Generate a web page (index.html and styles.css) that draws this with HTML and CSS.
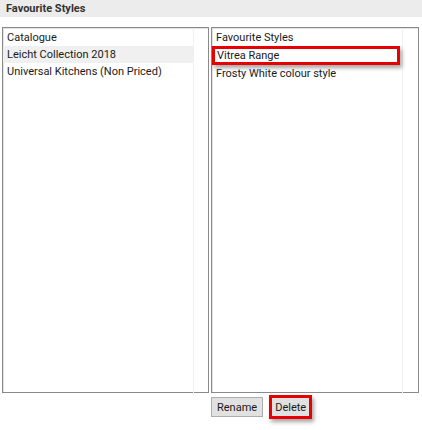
FILE: index.html
```html
<!DOCTYPE html>
<html lang="en">
<head>
  <meta charset="UTF-8">
  <meta name="viewport" content="width=device-width, initial-scale=1.0">
  <title>Favourite Styles</title>
  <link rel="stylesheet" href="styles.css">
</head>
<body>

  <h1 class="title-bar">Favourite Styles</h1>

  <div class="panels">
    <div class="list-box">
      <ul class="list">
        <li class="list-head">Catalogue</li>
        <li class="selected">Leicht Collection 2018</li>
        <li>Universal Kitchens (Non Priced)</li>
      </ul>
    </div>

    <div class="right-col">
      <div class="list-box">
        <ul class="list">
          <li class="list-head">Favourite Styles</li>
          <li class="marked">Vitrea Range</li>
          <li>Frosty White colour style</li>
        </ul>
      </div>

      <div class="buttons">
        <button class="btn">Rename</button>
        <button class="btn marked-btn">Delete</button>
      </div>
    </div>
  </div>

</body>
</html>
```

FILE: styles.css
```css
body {
  margin: 0;
  width: 422px;
  height: 430px;
  background-color: #ffffff;
  font-family: Roboto, "Liberation Sans", Arial, sans-serif;
  font-size: 11px;
  color: #1a1a1a;
}

.title-bar {
  margin: 0;
  height: 17px;
  line-height: 17px;
  padding-left: 6px;
  background-color: #ececec;
  font-size: 11px;
  font-weight: bold;
  color: #333;
}

.panels {
  display: flex;
  gap: 2px;
  padding: 10px 3px 0 2px;
}

.list-box {
  width: 206px;
  height: 364px;
  border: 1px solid #8a8a8a;
  box-shadow: inset 1px 1px 0 #e2e2e2;
  background-color: #fff;
}

.right-col {
  display: flex;
  flex-direction: column;
}

.list {
  list-style: none;
  margin: 0;
  padding: 1px 0 0 0;
  width: 190px;
  height: 100%;
  border-right: 1px solid #f0f0f0;
}

.list li {
  height: 17px;
  line-height: 17px;
  padding-left: 4px;
  white-space: nowrap;
}

.list .selected {
  background-color: #f0f0f0;
}

.list .marked {
  margin: 0 -1px 0 0;
  width: 180px;
  height: 13px;
  line-height: 13px;
  border: 3px solid #e60000;
  padding-left: 2px;
  box-shadow: 2px 3px 4px rgba(0, 0, 0, 0.35);
}

.buttons {
  display: flex;
  gap: 6px;
  padding: 4px 0 0 0;
}

.btn {
  height: 20px;
  padding: 0 5px;
  border: 1px solid #adadad;
  background-color: #e1e1e1;
  font-family: Roboto, "Liberation Sans", Arial, sans-serif;
  font-size: 11px;
  color: #1a1a1a;
}

.marked-btn {
  border: 3px solid #e60000;
  height: 24px;
  margin-top: -2px;
  padding: 0 3px;
  box-shadow: 2px 3px 4px rgba(0, 0, 0, 0.35);
}
```
